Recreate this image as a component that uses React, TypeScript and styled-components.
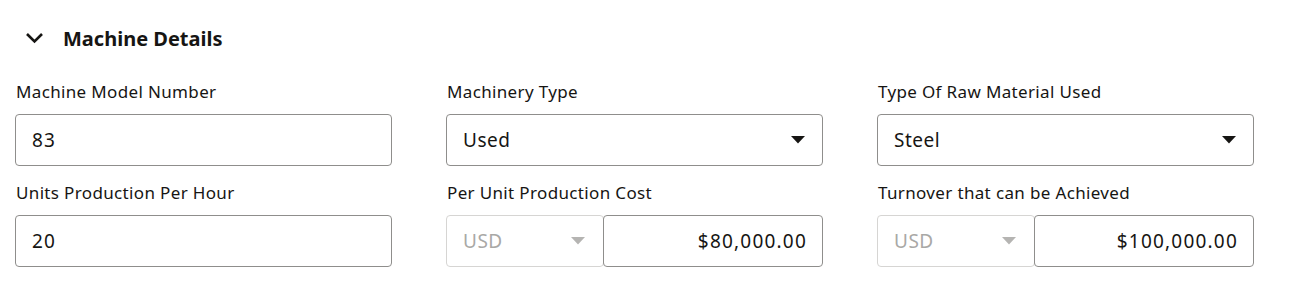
import React from 'react';
import styled, { createGlobalStyle } from 'styled-components';

const GlobalStyle = createGlobalStyle`
  body {
    margin: 0;
    background: #fff;
    font-family: 'Noto Sans', 'Open Sans', sans-serif;
    color: #161513;
  }
`;

interface TextField {
  kind: 'text';
  label: string;
  value: string;
}

interface SelectField {
  kind: 'select';
  label: string;
  value: string;
}

interface MoneyField {
  kind: 'money';
  label: string;
  currency: string;
  value: string;
}

type Field = TextField | SelectField | MoneyField;

const fields: Field[] = [
  { kind: 'text', label: 'Machine Model Number', value: '83' },
  { kind: 'select', label: 'Machinery Type', value: 'Used' },
  { kind: 'select', label: 'Type Of Raw Material Used', value: 'Steel' },
  { kind: 'text', label: 'Units Production Per Hour', value: '20' },
  { kind: 'money', label: 'Per Unit Production Cost', currency: 'USD', value: '$80,000.00' },
  { kind: 'money', label: 'Turnover that can be Achieved', currency: 'USD', value: '$100,000.00' },
];

const Caret = ({ disabled }: { disabled?: boolean }) => (
  <svg width="14" height="8" viewBox="0 0 14 8">
    <path d="M0 0 L14 0 L7 7.5 Z" fill={disabled ? '#b5b4b2' : '#161513'} />
  </svg>
);

const FieldView = ({ field }: { field: Field }) => {
  if (field.kind === 'money') {
    return (
      <FieldWrap>
        <Label>{field.label}</Label>
        <MoneyRow>
          <CurrencyBox>
            <span>{field.currency}</span>
            <Caret disabled />
          </CurrencyBox>
          <AmountBox>{field.value}</AmountBox>
        </MoneyRow>
      </FieldWrap>
    );
  }
  return (
    <FieldWrap>
      <Label>{field.label}</Label>
      <InputBox>
        <Value $numeric={field.kind === 'text'}>{field.value}</Value>
        {field.kind === 'select' && <Caret />}
      </InputBox>
    </FieldWrap>
  );
};

const App = () => (
  <>
    <GlobalStyle />
    <Section>
      <Header>
        <svg width="19" height="12" viewBox="0 0 19 12">
          <path d="M2 2 L9.5 9.5 L17 2" fill="none" stroke="#161513" strokeWidth="2.6" />
        </svg>
        <Title>Machine Details</Title>
      </Header>
      <Grid>
        {fields.map((f) => (
          <FieldView field={f} key={f.label} />
        ))}
      </Grid>
    </Section>
  </>
);

const Section = styled.section`
  padding: 0 15px;
`;

const Header = styled.div`
  display: flex;
  align-items: center;
  gap: 19px;
  height: 76px;
  padding-left: 10px;
`;

const Title = styled.h2`
  margin: 0;
  font-size: 20px;
  font-weight: 700;
`;

const Grid = styled.div`
  display: grid;
  grid-template-columns: repeat(3, 377px);
  column-gap: 54px;
  row-gap: 17px;
  padding-top: 6px;
`;

const FieldWrap = styled.div`
  display: flex;
  flex-direction: column;
  gap: 12px;
`;

const Label = styled.label`
  font-size: 17px;
  line-height: 20px;
  letter-spacing: 0.35px;
  padding-left: 1px;
`;

const InputBox = styled.div`
  display: flex;
  align-items: center;
  justify-content: space-between;
  height: 52px;
  box-sizing: border-box;
  border: 1px solid #8f8e8c;
  border-radius: 4px;
  padding: 0 17px 0 16px;
  font-size: 19px;
`;

const Value = styled.span<{ $numeric?: boolean }>`
  letter-spacing: ${(p) => (p.$numeric ? '1.2px' : '0.5px')};
`;

const MoneyRow = styled.div`
  display: flex;
`;

const CurrencyBox = styled.div`
  display: flex;
  align-items: center;
  justify-content: space-between;
  width: 158px;
  height: 52px;
  box-sizing: border-box;
  border: 1px solid #d6d5d3;
  border-radius: 4px;
  padding: 0 18px 0 16px;
  font-size: 19px;
  letter-spacing: 0.5px;
  color: #a9a8a6;
  background: #fff;
`;

const AmountBox = styled.div`
  flex: 1;
  display: flex;
  align-items: center;
  justify-content: flex-end;
  height: 52px;
  box-sizing: border-box;
  margin-left: -1px;
  border: 1px solid #8f8e8c;
  border-radius: 4px;
  padding: 0 15px 0 16px;
  font-size: 19px;
  letter-spacing: 1.2px;
`;

export default App;
